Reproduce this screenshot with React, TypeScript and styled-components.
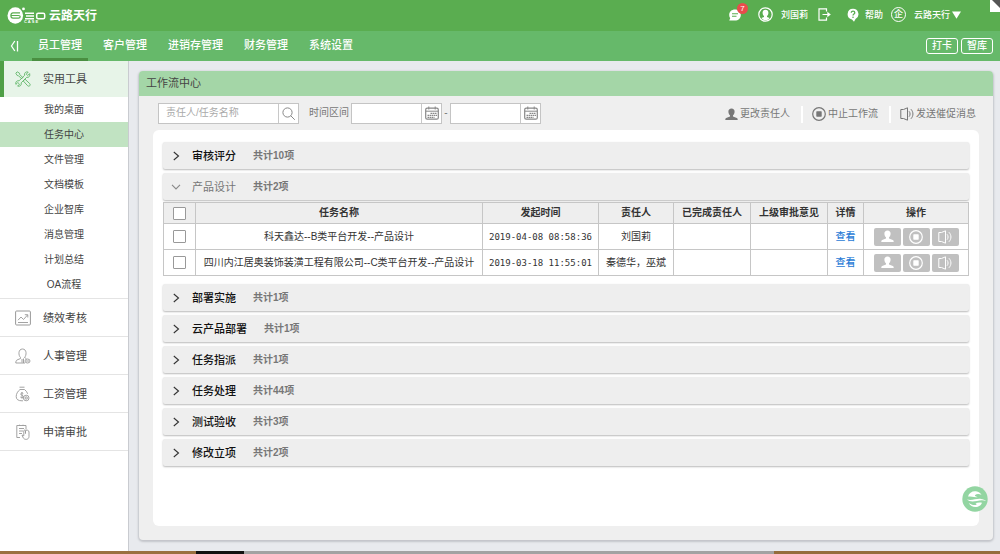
import React, { useState } from 'react';
import styled, { createGlobalStyle, css } from 'styled-components';

const GlobalStyle = createGlobalStyle`
  * { box-sizing: border-box; }
  body {
    margin: 0;
    color: #444;
    background: #e8eaee;
    font: 10px/16px "Liberation Sans", "Noto Sans CJK SC", sans-serif;
  }
  button, input { font: inherit; color: inherit; margin: 0; }
  button { cursor: pointer; }
  a { color: inherit; text-decoration: none; }
  svg { display: block; flex: none; }
`;

/* ---------- page frame ---------- */

const Page = styled.div`
  display: flex;
  flex-direction: column;
  min-height: 100vh;
`;

const TopBar = styled.header`
  position: relative;
  display: flex;
  align-items: center;
  justify-content: space-between;
  height: 31px;
  padding: 0 39px 2px 7px;
  color: #fff;
  background: #5aad50;
  font-size: 9px;
  font-weight: 500;
`;

const Brand = styled.a`
  display: flex;
  align-items: center;
  gap: 2px;
  padding-top: 2px;
  font-size: 12px;
  font-weight: 700;
`;

const TopLinks = styled.div`
  display: flex;
  align-items: center;
`;

const TopLink = styled.a<{ $before?: number; $gap?: number }>`
  position: relative;
  display: flex;
  align-items: center;
  gap: ${p => p.$gap ?? 8}px;
  margin-left: ${p => p.$before ?? 0}px;
`;

const Badge = styled.span`
  position: absolute;
  top: -5px;
  right: -6px;
  width: 11px;
  height: 11px;
  border-radius: 50%;
  background: #e94c4c;
  font-size: 8px;
  line-height: 11px;
  text-align: center;
`;

const Company = styled.span`
  display: flex;
  align-items: center;
  gap: 2px;
`;

const CompanyMark = styled.span`
  width: 15px;
  height: 15px;
  border: 1px solid #fff;
  border-radius: 50%;
  line-height: 12px;
  text-align: center;
`;

const Corner = styled.span`
  position: absolute;
  top: 0;
  right: 0;
`;

const NavBar = styled.nav`
  display: flex;
  align-items: center;
  height: 30px;
  padding: 0 7px 0 10px;
  color: #fff;
  background: #66b96a;
  font-size: 11px;
`;

const Collapse = styled.button`
  width: 22px;
  padding: 0;
  border: 0;
  background: none;
`;

const Tabs = styled.div`
  display: flex;
  flex: 1;
  gap: 9px;
`;

const Tab = styled.a<{ $active?: boolean }>`
  height: 30px;
  padding: 0 6px;
  line-height: 28px;
  border-bottom: 3px solid ${p => (p.$active ? '#4a8f41' : 'transparent')};
  font-weight: 500;
`;

const NavButton = styled.button`
  width: 32px;
  height: 16px;
  margin-left: 3px;
  padding: 0;
  border: 1px solid #fff;
  border-radius: 3px;
  background: none;
  font-size: 10px;
  font-weight: 500;
  line-height: 14px;
`;

const Body = styled.div`
  display: flex;
  flex: 1;
`;

const Desktop = styled.div`
  display: flex;
  height: 3px;
  background: #946d3c;
`;

const DockPart = styled.span<{ $color: string; $share: number }>`
  flex: ${p => p.$share};
  background: ${p => p.$color};
`;

/* ---------- sidebar ---------- */

const Sidebar = styled.aside`
  width: 129px;
  flex: none;
  border-right: 1px solid #c9cbd0;
  background: #fff;
`;

const Category = styled.a<{ $active?: boolean }>`
  display: flex;
  align-items: center;
  gap: 12px;
  height: 38px;
  padding-left: 15px;
  border-bottom: 1px solid #e4e4e4;
  font-size: 11px;
  ${p =>
    p.$active &&
    css`
      height: 36px;
      padding-left: 11px;
      border-left: 4px solid #4f9f46;
      border-bottom: 0;
      background: #e7f4e8;
    `}
`;

const SubList = styled.div`
  padding-bottom: 1px;
  border-bottom: 1px solid #e4e4e4;
`;

const SubItem = styled.a<{ $active?: boolean }>`
  display: block;
  height: 25px;
  line-height: 26px;
  text-align: center;
  background: ${p => (p.$active ? '#c1e3c2' : 'transparent')};
`;

/* ---------- workflow panel ---------- */

const Main = styled.main`
  display: flex;
  flex: 1;
  min-width: 0;
  padding: 10px 7px 11px 10px;
`;

const Panel = styled.section`
  display: flex;
  flex: 1;
  flex-direction: column;
  min-width: 0;
  border-radius: 4px;
  background: #efefef;
  box-shadow: 0 1px 2px 1px #c3c5ca;
`;

const PanelTitle = styled.h1`
  margin: 0;
  padding: 0 7px;
  border-radius: 4px 4px 0 0;
  background: #a4d6a7;
  font-size: 11px;
  font-weight: 400;
  line-height: 25px;
`;

const Toolbar = styled.div`
  display: flex;
  align-items: center;
  height: 34px;
  padding: 0 17px 0 19px;
  color: #777;
`;

const Field = styled.div<{ $width: number }>`
  display: flex;
  width: ${p => p.$width}px;
  height: 21px;
  border: 1px solid #c4c4c4;
  background: #fff;
`;

const TextInput = styled.input`
  flex: 1;
  min-width: 0;
  padding: 0 7px;
  border: 0;
  outline: 0;
  background: none;
  &::placeholder { color: #aaa; }
`;

const FieldButton = styled.button`
  display: flex;
  align-items: center;
  justify-content: center;
  width: 20px;
  padding: 0;
  border: 0;
  border-left: 1px solid #c8c8c8;
  background: none;
`;

const RangeLabel = styled.label`
  margin: 0 2px 0 10px;
`;

const Dash = styled.span`
  width: 8px;
  text-align: center;
`;

const Tools = styled.div`
  display: flex;
  margin-left: auto;
  padding-top: 2px;
`;

const Tool = styled.button`
  display: flex;
  align-items: center;
  gap: 2px;
  height: 17px;
  padding: 0 11px 0 9px;
  border: 0;
  background: none;
  & + & { border-left: 2px solid #fff; }
  &:last-child { padding-right: 0; }
`;

const Sheet = styled.div`
  flex: 1;
  margin: 0 14px;
  padding: 12px 10px;
  border-radius: 6px;
  background: #fff;
`;

const PanelFoot = styled.div`
  height: 14px;
`;

const Group = styled.section`
  margin-bottom: 4px;
`;

const GroupHead = styled.button<{ $open: boolean }>`
  display: flex;
  align-items: center;
  width: 100%;
  height: 27px;
  padding: 0 8px;
  border: 0;
  border-radius: 2px;
  background: #eee;
  box-shadow: 0 1px 2px rgba(0, 0, 0, 0.28);
  color: ${p => (p.$open ? '#777' : '#111')};
  font-size: 11px;
  font-weight: ${p => (p.$open ? 400 : 500)};
`;

const GroupName = styled.span`
  margin: 0 17px 0 11px;
`;

const GroupCount = styled.span`
  color: #777;
  font-size: 10px;
  font-weight: 700;
`;

const TaskTable = styled.table`
  width: 100%;
  margin: 2px 0 8px;
  border-collapse: collapse;
  table-layout: fixed;
  color: #333;
  text-align: center;
`;

const Th = styled.th<{ $width?: number }>`
  width: ${p => (p.$width ? `${p.$width}px` : 'auto')};
  height: 21px;
  padding: 0;
  border: 1px solid #c6c6c6;
  background: #eee;
  font-weight: 700;
`;

const Td = styled.td`
  height: 26px;
  padding: 0;
  border: 1px solid #c6c6c6;
`;

const Time = styled.time`
  font-family: "DejaVu Sans Mono", monospace;
  font-size: 9px;
`;

const Check = styled.input`
  display: block;
  width: 13px;
  height: 13px;
  margin: 0 auto;
  border: 1px solid #999;
  border-radius: 1px;
  background: #fff;
  appearance: none;
  &:checked { background: #5aad50; }
`;

const DetailLink = styled.a`
  color: #2a7bd6;
  font-weight: 500;
`;

const Actions = styled.div`
  display: flex;
  justify-content: center;
  gap: 2px;
`;

const Action = styled.button`
  display: flex;
  align-items: center;
  justify-content: center;
  width: 27px;
  height: 18px;
  padding: 0;
  border: 0;
  border-radius: 2px;
  background: #c0c0c0;
  color: #fff;
`;

const Assistant = styled.button`
  position: fixed;
  right: 12px;
  bottom: 42px;
  padding: 0;
  border: 0;
  background: none;
`;

/* ---------- icons ---------- */

const PersonIcon = () => (
  <svg width="13" height="13" viewBox="0 0 13 13" fill="currentColor">
    <path d="M6.5.6c2 0 3.100 1.300 3.100 3.100 0 1.500-.7 2.900-1.600 3.600v1.200l3.800 1.400c.7.300.9.900.9 2.200H.3c0-1.300.2-1.900.9-2.200L5 8.500V7.300C4.100 6.600 3.400 5.200 3.400 3.700 3.400 1.900 4.500.6 6.500.6z" />
  </svg>
);

const StopIcon = () => (
  <svg width="14" height="14" viewBox="0 0 14 14" fill="none" stroke="currentColor">
    <circle cx="7" cy="7" r="6.300" strokeWidth="1.200" />
    <rect x="4.300" y="4.300" width="5.400" height="5.400" rx=".6" fill="currentColor" stroke="none" />
  </svg>
);

const SpeakerIcon = () => (
  <svg width="14" height="14" viewBox="0 0 14 14" fill="none" stroke="currentColor" strokeWidth="1">
    <path d="M3.500 2.500H.8v9h2.700M3.500 2.500 7.500.8v12.400L3.500 11.500" strokeLinejoin="round" />
    <path d="M9.300 4.600c1.100 1.400 1.100 3.400 0 4.800M11.200 2.500c2.400 2.600 2.400 6.400 0 9" strokeLinecap="round" />
  </svg>
);

const SearchIcon = () => (
  <svg width="13" height="13" viewBox="0 0 13 13" fill="none" stroke="#888" strokeWidth="1">
    <circle cx="5.500" cy="5.500" r="4.600" />
    <path d="m9 9 3.500 3.500" strokeLinecap="round" />
  </svg>
);

const CalendarIcon = () => (
  <svg width="14" height="14" viewBox="0 0 14 14" fill="none" stroke="#888">
    <rect x=".7" y="2.200" width="12.600" height="11" rx="1.500" strokeWidth="1.200" />
    <path d="M1 5.200h12M3.800.5v3M10.200.5v3" />
    <path d="M5.500 7.300H12M2.500 9.300H12M2.500 11.300h7" strokeWidth="1.200" strokeDasharray="1.600 .5" />
  </svg>
);

const Chevron = ({ open }: { open: boolean }) => (
  <svg width="10" height="10" viewBox="0 0 10 10" fill="none" stroke={open ? '#888' : '#333'} strokeWidth="1.100">
    <path d={open ? 'M1 2.800 5 7l4-4.200' : 'M2.800 1 7.500 5 2.800 9'} />
  </svg>
);

const LogoIcon = () => (
  <svg width="40" height="20" viewBox="0 0 40 20" fill="none" stroke="#fff">
    <ellipse cx="8.300" cy="9.500" rx="7.800" ry="8.300" fill="#fff" stroke="none" />
    <path d="M13 6.900H6C3.200 6.900 3.200 12.100 6 12.100h5.500c2.300 0 2.300-2.600 0-2.600H4.500" stroke="#5aad50" strokeWidth="1.200" />
    <circle cx="16.500" cy="2.900" r="1.400" fill="#fff" stroke="none" />
    <path d="M18 7.300h9M19 10h8M18 12.700h9" strokeWidth="1.500" />
    <rect x="29.700" y="7.300" width="8" height="5.400" rx="1.500" strokeWidth="1.500" />
    <text x="17" y="17" fill="#fff" stroke="none" fontSize="4" fontFamily="Liberation Sans, sans-serif" fontWeight="700">C  A  S  E</text>
  </svg>
);

const ChatIcon = () => (
  <svg width="14" height="14" viewBox="0 0 14 14">
    <path d="M7 1.500c3.300 0 5.800 2.200 5.800 5.400S10.300 12.600 7 12.600H1.200l1-2.400C1.500 9.300 1.200 8.200 1.200 7 1.200 3.700 3.700 1.500 7 1.500z" fill="#fff" />
    <path d="M4 5.800h6M4 8.300h4.500" stroke="#5aad50" strokeWidth="1.100" />
  </svg>
);

const UserIcon = () => (
  <svg width="15" height="15" viewBox="0 0 15 15">
    <circle cx="7.500" cy="7.500" r="6.700" fill="none" stroke="#fff" strokeWidth="1.200" />
    <path d="M7.500 2.800c1.800 0 2.900 1.200 2.900 3 0 1.400-.6 2.600-1.400 3.200v.9l2.600 1.200c-1 1.400-2.500 2.200-4.100 2.200s-3.100-.8-4.100-2.200L6 9.900V9c-.8-.6-1.400-1.800-1.400-3.200 0-1.800 1.100-3 2.900-3z" fill="#fff" />
  </svg>
);

const ExitIcon = () => (
  <svg width="13" height="13" viewBox="0 0 13 13" fill="none" stroke="#fff" strokeWidth="1.200">
    <path d="M8.500 3.500V.8H1v11.400h7.500V9.500M4.500 6.500h6" />
    <path d="m9.300 3.800 3.500 2.700-3.500 2.700z" fill="#fff" stroke="none" />
  </svg>
);

const HelpIcon = () => (
  <svg width="12" height="14" viewBox="0 0 12 14">
    <path d="M6 .8a5.400 5.400 0 0 1 2.500 10.200L7 13.800 5 11.500A5.400 5.400 0 0 1 6 .8z" fill="#fff" />
    <path d="M4.300 4.800c0-2.300 3.500-2.200 3.500 0C7.800 6.100 6 6 6 7.500" fill="none" stroke="#5aad50" strokeWidth="1.300" />
    <circle cx="6" cy="9.200" r=".8" fill="#5aad50" />
  </svg>
);

const CaretIcon = () => (
  <svg width="9" height="8" viewBox="0 0 9 8"><path d="M0 .5h9L4.500 7.800z" fill="#fff" /></svg>
);

const CornerIcon = () => (
  <svg width="10" height="12" viewBox="0 0 10 12">
    <path d="M0 0h10v12H0z" fill="#fff" />
    <path d="M2 0h8v8z" fill="#555" />
  </svg>
);

const CollapseIcon = () => (
  <svg width="9" height="12" viewBox="0 0 9 12" fill="none" stroke="#fff" strokeWidth="1.300">
    <path d="M4.800 1 1.500 6l3.300 5M7.500 1v10.500" />
  </svg>
);

const ToolsIcon = () => (
  <svg width="16" height="16" viewBox="0 0 16 16" fill="none" stroke="#5fb566" strokeWidth=".9" strokeLinejoin="round">
    <path d="M.8 2.200 2.200.8l2.300 1.400.3 1.400 3 3-1.200 1.200-3-3-1.400-.3z" />
    <path d="m9 9.200 1-1 4.700 4.400c1.400 1.500-.6 3.500-2.100 2.100L8.300 10z" />
    <path d="M14.600 2.600 12.700 4.500 11.300 3.100l1.900-2C10.900.2 9 2 9.600 4.300L4.100 9.800C1.800 9.200.1 11.200.9 13.400l1.900-1.900 1.700 1.700-1.900 1.900c2.300.8 4.200-1 3.600-3.300l5.500-5.500c2.300.6 3.700-1.500 2.900-3.700z" />
  </svg>
);

const ChartIcon = () => (
  <svg width="16" height="16" viewBox="0 0 16 16" fill="none" stroke="#999">
    <rect x=".6" y="1" width="14.800" height="14" rx="1" />
    <path d="M3 10.200 6 7l2.500 2.500L12.500 5M9.800 4.700h3v2.800M3 12.500h10" strokeWidth=".9" />
  </svg>
);

const StaffIcon = () => (
  <svg width="16" height="16" viewBox="0 0 16 16" fill="none" stroke="#999" strokeWidth=".9">
    <path d="M5.500 9.500C3.300 7.500 3 1 7.500 1s4.200 6.500 2 8.500l1.800 1M5.500 9.500v1L2 12c-.9.500-1.200 1.500-1.200 3H10" />
    <path d="M7 11v3.500M8.500 10.500V15" />
    <ellipse cx="12.500" cy="13" rx="2.500" ry="2" />
    <path d="M11 13h3" />
  </svg>
);

const MoneyIcon = () => (
  <svg width="16" height="16" viewBox="0 0 16 16" fill="none" stroke="#999" strokeWidth=".9">
    <path d="M4.500 1.200h5M5 3.500h4.500M5 3.500C2.500 5.500 1.200 8 1.200 10.500c0 3 2 4.300 5.800 4.300h1M9.500 3.500c1.500 1.200 2.600 2.600 3.200 4.300" />
    <path d="M8.300 7.500C7 6.500 5.500 7 5.800 8.300c.3 1.200 2.500.9 2.500 2.400 0 1.300-2 1.300-3 .3M7 6v6.500" />
    <circle cx="11.200" cy="12" r="2.800" />
    <circle cx="11.200" cy="12" r="1.200" />
  </svg>
);

const ApproveIcon = () => (
  <svg width="16" height="16" viewBox="0 0 16 16" fill="none" stroke="#999" strokeWidth=".9">
    <path d="M5 13.500H1.800v-12H11v4M4.500 1.500V.7M8 1.500V.7M4 4.500h5M4 7h4M4 9.500h3" />
    <path d="m7 11 1.800.8V7c0-1.300 1.700-1.300 1.700 0v2.500V7c.5-1.500 3.500-1 3.500 1v4.500c0 3.500-5 4-6.200.5z" />
  </svg>
);

const AssistantIcon = () => (
  <svg width="26" height="26" viewBox="0 0 26 26">
    <circle cx="13" cy="13" r="12.700" fill="#93d5a2" />
    <path d="M6 10.500C7 6.500 11 4.500 15 5.500c2 .5 3.700 1.700 4.500 3.300-2.300-1.200-5-1.200-6.300.2-1 1.200 1 1.700 2.800 2-3 .7-6.500-.5-10-.5zM5 13.600c5 1.400 9-1.200 14-.7 2 .2 4 .9 5 2-3-.9-6-.6-9 0-4 .8-8 .8-10-1.300zM6.800 17c1.700 3.700 5.500 4.700 9 3.700 2-.6 3.700-2 4.200-3.900-2.500-.5-5-.1-6.800.4 1.500.3 2 1.300.5 1.700-2 .5-4.700-.3-6.900-1.900z" fill="#fff" />
  </svg>
);

/* ---------- data ---------- */

const tabs = ['员工管理', '客户管理', '进销存管理', '财务管理', '系统设置'];
const subItems = ['我的桌面', '任务中心', '文件管理', '文档模板', '企业智库', '消息管理', '计划总结', 'OA流程'];
const categories = [
  { name: '绩效考核', icon: <ChartIcon /> },
  { name: '人事管理', icon: <StaffIcon /> },
  { name: '工资管理', icon: <MoneyIcon /> },
  { name: '申请审批', icon: <ApproveIcon /> },
];

interface Task { name: string; time: string; owner: string }

const groups: { name: string; count: number; tasks?: Task[] }[] = [
  { name: '审核评分', count: 10 },
  {
    name: '产品设计',
    count: 2,
    tasks: [
      { name: '科天鑫达--B类平台开发--产品设计', time: '2019-04-08 08:58:36', owner: '刘国莉' },
      { name: '四川内江居奥装饰装潢工程有限公司--C类平台开发--产品设计', time: '2019-03-18 11:55:01', owner: '秦德华，巫斌' },
    ],
  },
  { name: '部署实施', count: 1 },
  { name: '云产品部署', count: 1 },
  { name: '任务指派', count: 1 },
  { name: '任务处理', count: 44 },
  { name: '测试验收', count: 3 },
  { name: '修改立项', count: 2 },
];

function Tasks({ tasks }: { tasks: Task[] }) {
  return (
    <TaskTable>
      <thead>
        <tr>
          <Th $width={32}><Check type="checkbox" aria-label="全选" /></Th>
          <Th>任务名称</Th>
          <Th $width={116}>发起时间</Th>
          <Th $width={75}>责任人</Th>
          <Th $width={77}>已完成责任人</Th>
          <Th $width={77}>上级审批意见</Th>
          <Th $width={36}>详情</Th>
          <Th $width={105}>操作</Th>
        </tr>
      </thead>
      <tbody>
        {tasks.map(task => (
          <tr key={task.name}>
            <Td><Check type="checkbox" aria-label={task.name} /></Td>
            <Td>{task.name}</Td>
            <Td><Time>{task.time}</Time></Td>
            <Td>{task.owner}</Td>
            <Td />
            <Td />
            <Td><DetailLink href="#detail">查看</DetailLink></Td>
            <Td>
              <Actions>
                <Action aria-label="更改责任人"><PersonIcon /></Action>
                <Action aria-label="中止工作流"><StopIcon /></Action>
                <Action aria-label="发送催促消息"><SpeakerIcon /></Action>
              </Actions>
            </Td>
          </tr>
        ))}
      </tbody>
    </TaskTable>
  );
}

export default function App() {
  const [open, setOpen] = useState('产品设计');

  return (
    <Page>
      <GlobalStyle />
      <TopBar>
        <Brand href="#home"><LogoIcon />云路天行</Brand>
        <TopLinks>
          <TopLink href="#messages" aria-label="消息"><ChatIcon /><Badge>7</Badge></TopLink>
          <TopLink href="#me" $before={16}><UserIcon />刘国莉</TopLink>
          <TopLink href="#logout" $before={10} aria-label="退出"><ExitIcon /></TopLink>
          <TopLink href="#help" $before={16} $gap={6}><HelpIcon />帮助</TopLink>
          <TopLink href="#company" $before={8}>
            <CompanyMark>企</CompanyMark>
            <Company>云路天行<CaretIcon /></Company>
          </TopLink>
        </TopLinks>
        <Corner><CornerIcon /></Corner>
      </TopBar>

      <NavBar>
        <Collapse aria-label="收起菜单"><CollapseIcon /></Collapse>
        <Tabs>
          {tabs.map((tab, i) => <Tab key={tab} href="#tab" $active={i === 0}>{tab}</Tab>)}
        </Tabs>
        <NavButton>打卡</NavButton>
        <NavButton>智库</NavButton>
      </NavBar>

      <Body>
        <Sidebar>
          <Category href="#tools" $active><ToolsIcon />实用工具</Category>
          <SubList>
            {subItems.map(item => (
              <SubItem key={item} href="#item" $active={item === '任务中心'}>{item}</SubItem>
            ))}
          </SubList>
          {categories.map(c => <Category key={c.name} href="#category">{c.icon}{c.name}</Category>)}
        </Sidebar>

        <Main>
          <Panel>
            <PanelTitle>工作流中心</PanelTitle>
            <Toolbar>
              <Field $width={141}>
                <TextInput placeholder="责任人/任务名称" aria-label="责任人/任务名称" />
                <FieldButton aria-label="搜索"><SearchIcon /></FieldButton>
              </Field>
              <RangeLabel htmlFor="from">时间区间</RangeLabel>
              <Field $width={91}>
                <TextInput id="from" />
                <FieldButton aria-label="选择开始日期"><CalendarIcon /></FieldButton>
              </Field>
              <Dash>-</Dash>
              <Field $width={91}>
                <TextInput aria-label="结束时间" />
                <FieldButton aria-label="选择结束日期"><CalendarIcon /></FieldButton>
              </Field>
              <Tools>
                <Tool><PersonIcon />更改责任人</Tool>
                <Tool><StopIcon />中止工作流</Tool>
                <Tool><SpeakerIcon />发送催促消息</Tool>
              </Tools>
            </Toolbar>
            <Sheet>
              {groups.map(g => {
                const isOpen = open === g.name;
                return (
                  <Group key={g.name}>
                    <GroupHead $open={isOpen} aria-expanded={isOpen} onClick={() => setOpen(isOpen ? '' : g.name)}>
                      <Chevron open={isOpen} />
                      <GroupName>{g.name}</GroupName>
                      <GroupCount>共计{g.count}项</GroupCount>
                    </GroupHead>
                    {isOpen && g.tasks && <Tasks tasks={g.tasks} />}
                  </Group>
                );
              })}
            </Sheet>
            <PanelFoot />
          </Panel>
        </Main>
      </Body>

      <Desktop>
        <DockPart $color="#9a7040" $share={196} />
        <DockPart $color="#111" $share={48} />
        <DockPart $color="#a2a2a2" $share={530} />
        <DockPart $color="#946d3c" $share={226} />
      </Desktop>
      <Assistant aria-label="在线助手"><AssistantIcon /></Assistant>
    </Page>
  );
}
